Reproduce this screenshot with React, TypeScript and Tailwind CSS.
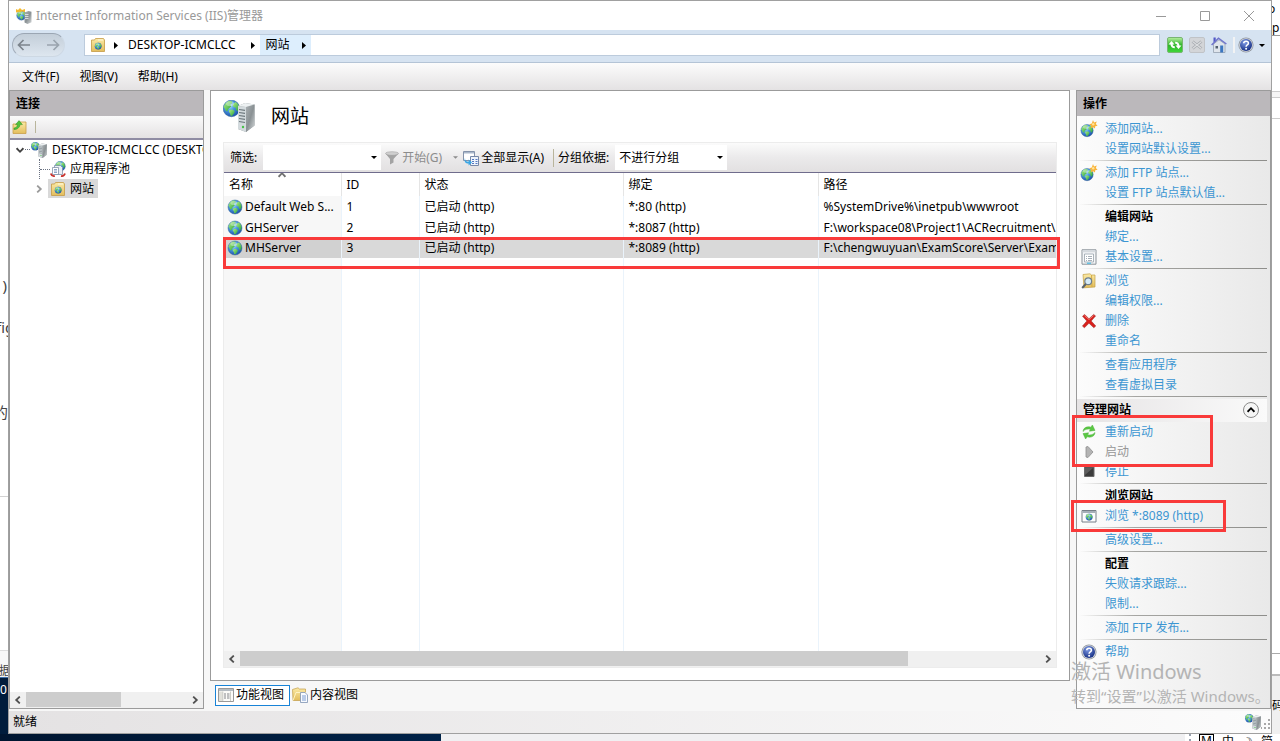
import React from 'react';

type IconProps = { className?: string };

type Site = {
  name: string;
  id: number;
  state: string;
  binding: string;
  path: string;
};

type Action = {
  label: string;
  icon?: React.ReactNode;
  kind?: 'link' | 'title' | 'disabled';
};

const sites: Site[] = [
  { name: 'Default Web S...', id: 1, state: '已启动 (http)', binding: '*:80 (http)', path: '%SystemDrive%\\inetpub\\wwwroot' },
  { name: 'GHServer', id: 2, state: '已启动 (http)', binding: '*:8087 (http)', path: 'F:\\workspace08\\Project1\\ACRecruitment\\' },
  { name: 'MHServer', id: 3, state: '已启动 (http)', binding: '*:8089 (http)', path: 'F:\\chengwuyuan\\ExamScore\\Server\\Exam' },
];

// Gradients shared by all the icons
const IconDefs = () => (
  <svg className="absolute h-0 w-0" aria-hidden="true">
    <defs>
      <radialGradient id="sea" cx="38%" cy="32%" r="75%">
        <stop offset="0" stopColor="#c4e9fc" />
        <stop offset="0.4" stopColor="#4c9ce4" />
        <stop offset="1" stopColor="#1746a4" />
      </radialGradient>
      <linearGradient id="land" x1="0" y1="0" x2="1" y2="1">
        <stop offset="0" stopColor="#b4f08a" />
        <stop offset="1" stopColor="#24a03a" />
      </linearGradient>
      <linearGradient id="steel" x1="0" y1="0" x2="1" y2="1">
        <stop offset="0" stopColor="#a9afb2" />
        <stop offset="0.5" stopColor="#8a9194" />
        <stop offset="1" stopColor="#d5d9da" />
      </linearGradient>
      <linearGradient id="folder" x1="0" y1="0" x2="0" y2="1">
        <stop offset="0" stopColor="#fbeaa6" />
        <stop offset="1" stopColor="#e3bd5c" />
      </linearGradient>
      <linearGradient id="grass" x1="0" y1="0" x2="0" y2="1">
        <stop offset="0" stopColor="#b9efa0" />
        <stop offset="0.5" stopColor="#2fb52b" />
        <stop offset="1" stopColor="#3fd83a" />
      </linearGradient>
      <radialGradient id="navy" cx="40%" cy="30%" r="75%">
        <stop offset="0" stopColor="#7f9be6" />
        <stop offset="1" stopColor="#10297f" />
      </radialGradient>
    </defs>
  </svg>
);

const GlobeShape = () => (
  <>
    <circle cx="8" cy="8" r="7" fill="url(#sea)" stroke="#3c6c9c" strokeWidth="0.5" />
    <path d="M2.600 4 5.400 1.600l3 .2.4 1.800-1.800 1.200.8 1.600-2.200 1.800-1.200 2.400-1.200-.6-1-2.200-.8-1z" fill="url(#land)" />
    <path d="m10 3.600 1.800-1 2 2 .9 3.200-1.300 2.600-1.400-1-.4-2-1.800-.6-.8-1.600z" fill="url(#land)" />
    <path d="m6.200 9.400 2.600-.6 2 1.400-.6 2-1.800 2.200-1.200-.4-.4-2-1-1.200z" fill="url(#land)" />
    <ellipse cx="6.800" cy="4" rx="3.400" ry="2" fill="#fff" opacity="0.35" />
  </>
);

const Globe = ({ className = 'h-4 w-4 shrink-0' }: IconProps) => (
  <svg viewBox="0 0 16 16" className={className} aria-hidden="true">
    <GlobeShape />
  </svg>
);

const NewSite = () => (
  <svg viewBox="0 0 18 18" className="h-[18px] w-[18px]" aria-hidden="true">
    <g transform="translate(0 3.500) scale(.88)">
      <GlobeShape />
    </g>
    <path d="m13 0 1 2.400 2.800-.8-1 2.400 1.800 1.800-2.400.4-.2 2.400-2-1.400-2.200 1 .4-2.400-2-1.600 2.600-.6z" fill="#f9b43a" />
    <circle cx="13.200" cy="4.200" r="1.200" fill="#ffe39a" />
  </svg>
);

const ServerGlobe = ({ className = 'h-4 w-4 shrink-0' }: IconProps) => (
  <svg viewBox="0 0 32 32" className={className} aria-hidden="true">
    <g transform="translate(-1 -1) scale(1.180)">
      <GlobeShape />
    </g>
    <path d="m15 6 7-3 9.500 1.500v21L23 32l-8-3z" fill="#8b9396" />
    <path d="m15 6 8 1v25l-8-3z" fill="#d3dadd" />
    <path d="m23 7 8.500-2.500v21L23 32z" fill="url(#steel)" />
    <path d="m15 6 7-3 9.500 1.500L23 7z" fill="#edf1f2" />
    <path d="M16 9.500l6 .8M16 12.500l6 .8M16 15.500l6 .8M16 18.500l6 .9M16 21.500l6 1" stroke="#6c777c" strokeWidth="1.200" />
    <circle cx="20" cy="27" r="1.200" fill="#46c246" />
  </svg>
);

const SiteFolder = ({ className = 'h-4 w-4 shrink-0' }: IconProps) => (
  <svg viewBox="0 0 16 16" className={className} aria-hidden="true">
    <path d="M1.500 3h3l1-1.500h8l1 1.500v11.500h-13z" fill="url(#folder)" stroke="#c59b45" strokeWidth="0.8" />
    <path d="M8 3h5" stroke="#fff8dc" />
    <g transform="translate(4.400 5.400) scale(.47)">
      <GlobeShape />
    </g>
  </svg>
);

const UpFolder = () => (
  <svg viewBox="0 0 16 16" className="h-4 w-4" aria-hidden="true">
    <path d="M1 5h5l1-2h7v11.500H1z" fill="url(#folder)" stroke="#c9a04a" strokeWidth="0.8" />
    <path d="M2 9c1.500 0 3-.6 3.600-3.400H3.600L7 1.600l3.400 4H8.200C7.600 9 4.600 10.800 2 10.600z" fill="#4fc23c" stroke="#2f8f28" strokeWidth="0.5" />
  </svg>
);

const AppPool = () => (
  <svg viewBox="0 0 16 16" className="h-4 w-4 shrink-0" aria-hidden="true">
    <g transform="translate(4.500 -.5) scale(.72)">
      <GlobeShape />
    </g>
    <path d="M4.500 4.500h6l2 2v7h-8z" fill="#e9eef4" stroke="#7286a0" strokeWidth="0.7" />
    <path d="M2.500 6.500h6v7h-6z" fill="#fff" stroke="#7286a0" strokeWidth="0.7" />
    <path d="M4 8.500h3M4 10h3M4 11.500h3" stroke="#5f7fb0" strokeWidth="0.7" />
    <path d="M.8 12.500c1 3 3 2.700 4 2.500M15 12.500c-1 3-3 2.700-4 2.500" fill="none" stroke="#c8322c" strokeWidth="1.800" />
  </svg>
);

const Funnel = () => (
  <svg viewBox="0 0 14 14" className="h-[14px] w-[14px]" aria-hidden="true">
    <path d="M.5 2.500 5 8v5.500l3.500-2V8l5-5.500z" fill="#a3a3a3" />
    <ellipse cx="7" cy="2.500" rx="6.500" ry="1.800" fill="#cfcfcf" stroke="#999" strokeWidth="0.5" />
  </svg>
);

const ShowAll = () => (
  <svg viewBox="0 0 16 16" className="h-4 w-4" aria-hidden="true">
    <path d="M.5 1.500h11v9H.5z" fill="#fff" stroke="#8493ab" />
    <path d="M1 2h10v1.500H1z" fill="#a9b7ca" />
    <path d="M7.500 6.500h8v9h-8z" fill="#eff4fb" stroke="#7688a8" />
    <path d="M9 9.500h2M12.500 9.500h2M9 11.500h2M12.500 11.500h2M9 13.500h2M12.500 13.500h2" stroke="#5378c2" />
    <path d="M2 8c0 2.600 1 3.800 3.600 3.800V9.600L9 12.600l-3.400 3v-2C2.400 13.600.8 11.600 2 8z" fill="#3aa6e4" />
  </svg>
);

const Settings = () => (
  <svg viewBox="0 0 16 16" className="h-4 w-4" aria-hidden="true">
    <path d="M1 .8h14v14.400H1z" fill="#f4f6f8" stroke="#8a9299" />
    <path d="M1.500 1.300h13v2h-13z" fill="#d5dade" />
    <path d="M3.500 5h9v8h-9z" fill="#fff" stroke="#98a2ab" strokeWidth="0.8" />
    <path d="M5 7.500h1M7 7.500h4M5 9.500h1M7 9.500h4M5 11.500h1M7 11.500h4" stroke="#8f9ba6" strokeWidth="0.8" />
    <path d="M6 14.200h4" stroke="#35b7e6" />
  </svg>
);

const Explore = () => (
  <svg viewBox="0 0 16 16" className="h-4 w-4" aria-hidden="true">
    <path d="M2 1.500 9 .8l1.500 1.200H14v12L3 14.800z" fill="url(#folder)" stroke="#c3a046" strokeWidth="0.7" />
    <path d="m10.500 2 .5 12" stroke="#d5ad48" />
    <circle cx="7.200" cy="8.200" r="3.400" fill="#d5ebf8" stroke="#6f7f8c" strokeWidth="1.200" />
    <path d="m4.800 11-3.600 4" stroke="#59636d" strokeWidth="2" />
  </svg>
);

const Delete = () => (
  <svg viewBox="0 0 16 16" className="h-4 w-4" aria-hidden="true">
    <path d="M1.500 3.200 3.600 1.400 8 5.800l4.600-4.400 2 1.500L10.200 8l4.600 5-2 1.800L8 10.200l-4.600 4.600-2-1.700L5.800 8z" fill="#d9201c" stroke="#98302c" strokeWidth="0.5" />
    <path d="m3.400 2.600 4.600 4 4.600-4" fill="none" stroke="#f58a80" strokeWidth="0.8" />
  </svg>
);

const Restart = () => (
  <svg viewBox="0 0 16 16" className="h-4 w-4" aria-hidden="true">
    <path d="M2 7.500C2.200 4 5.600 2 9.800 3.200L11.400 1l2.600 5.400-5.600.8 1-1.900C6.600 4.600 4 5.200 2 7.500z" fill="#5ac843" stroke="#4fb03f" strokeWidth="0.5" />
    <path d="M14 8.500c-.2 3.500-3.600 5.500-7.800 4.300L4.600 15 2 9.600l5.600-.8-1 1.900c2.800.7 5.400.1 7.400-2.200z" fill="#5ac843" stroke="#4fb03f" strokeWidth="0.5" />
  </svg>
);

const Play = () => (
  <svg viewBox="0 0 16 16" className="h-4 w-4" aria-hidden="true">
    <path d="M5 3v10l2 .5L12 8 7 2.500z" fill="#b4b4b4" stroke="#8f8f8f" strokeWidth="0.8" />
  </svg>
);

const Stop = () => (
  <svg viewBox="0 0 16 16" className="h-4 w-4" aria-hidden="true">
    <path d="M3.500 3h9.500v9.500H3.500z" fill="#3c3c3c" stroke="#6a6a6a" />
    <path d="M4 3.500h8.500L4 11z" fill="#5d5d5d" />
  </svg>
);

const BrowsePage = () => (
  <svg viewBox="0 0 16 16" className="h-4 w-4" aria-hidden="true">
    <path d="M1 2.500h14v11.500H1z" fill="#fdfdfd" stroke="#777f88" />
    <path d="M1.500 3h13v2h-13z" fill="#a6afb8" />
    <g transform="translate(4.300 5.200) scale(.48)">
      <GlobeShape />
    </g>
  </svg>
);

const Help = () => (
  <svg viewBox="0 0 16 16" className="h-4 w-4" aria-hidden="true">
    <circle cx="8" cy="8" r="7.600" fill="#8f959e" />
    <circle cx="8" cy="8" r="6.800" fill="#d3d7de" />
    <circle cx="8" cy="8" r="6" fill="url(#navy)" />
    <path d="M5.700 6.300C5.800 3.600 10.400 3.500 10.400 6.200 10.400 7.900 8.100 7.900 8.100 9.700" fill="none" stroke="#fff" strokeWidth="1.600" />
    <circle cx="8.100" cy="11.700" r="1" fill="#fff" />
  </svg>
);

const Refresh = () => (
  <svg viewBox="0 0 16 16" className="h-4 w-4" aria-hidden="true">
    <rect x="0.500" y="0.500" width="15" height="15" rx="1.500" fill="url(#grass)" stroke="#79b573" />
    <path d="M1.500 7.500 4.500 4l3 3.500H5.600c.2 1.200.9 1.800 2.200 1.800v2C5.200 11.300 3.700 9.900 3.500 7.500z" fill="#fff" />
    <path d="M14.500 8.500 11.500 12l-3-3.500h1.900C10.200 7.300 9.500 6.700 8.200 6.700v-2c2.600 0 4.100 1.400 4.300 3.800z" fill="#fff" />
  </svg>
);

const StopLoading = () => (
  <svg viewBox="0 0 16 16" className="h-4 w-4" aria-hidden="true">
    <rect x="0.500" y="0.500" width="15" height="15" rx="1.500" fill="#d3d5d8" stroke="#c0c3c7" />
    <path d="m3.500 4.500 9 7M12.500 4.500l-9 7" stroke="#a5a9ae" strokeWidth="2.800" />
    <path d="m3.500 4.500 9 7M12.500 4.500l-9 7" stroke="#dcdee0" strokeWidth="1.200" />
  </svg>
);

const Home = () => (
  <svg viewBox="0 0 16 16" className="h-4 w-4" aria-hidden="true">
    <path d="M2.500 7v8.500h11.500V7L8 2.800z" fill="#dfe5ec" stroke="#8c98a8" strokeWidth="0.7" />
    <path d="M2.500.5h2.200v4.500H2.500z" fill="#5258c6" />
    <path d="M.6 8 7.500 1.200 15.400 7" fill="none" stroke="#7075cc" strokeWidth="1.500" />
    <path d="M4.500 9H7v2.500H4.500z" fill="#52606e" />
    <path d="M9.200 8.500h3v7h-3z" fill="#3b76c0" />
  </svg>
);

const FeatureView = () => (
  <svg viewBox="0 0 16 16" className="h-4 w-4" aria-hidden="true">
    <path d="M.5 1.500h15v13H.5z" fill="#fbfbf8" stroke="#999" />
    <path d="M1 2h14v2H1z" fill="#b5bcc2" />
    <path d="M1 4.500h3.500v9.500H1z" fill="#e1e1da" />
    <path d="M4.800 4.500V14M12.500 4.500V14" stroke="#b9b9b2" strokeWidth="0.7" />
    <path d="M6 7h2M9 7h2.500M6 9h2M9 9h2.500M6 11h2M9 11h2.500" stroke="#84868a" />
  </svg>
);

const ContentView = () => (
  <svg viewBox="0 0 16 16" className="h-4 w-4" aria-hidden="true">
    <path d="M.5 2.500 6 .8l1.500 1.200h6V5l-2 8.500H1z" fill="url(#folder)" stroke="#c19c49" strokeWidth="0.7" />
    <path d="m1 13.500 3-8h9.500" fill="none" stroke="#fff3c4" />
    <path d="M8.500 5.500h4.500l2.500 2.500v7.500h-7z" fill="#f7fafe" stroke="#7d93b3" strokeWidth="0.8" />
    <path d="M10 9h4M10 11h4M10 13h4" stroke="#5b84c6" strokeWidth="0.8" />
  </svg>
);

const Caret = ({ className = 'h-[3px] w-[6px] text-black' }: IconProps) => (
  <svg viewBox="0 0 6 3" className={className} aria-hidden="true">
    <path d="M0 0h6L3 3z" fill="currentColor" />
  </svg>
);

const Crumb = () => (
  <svg viewBox="0 0 4 7" className="h-[7px] w-1" aria-hidden="true">
    <path d="M0 0v7l4-3.500z" />
  </svg>
);

const Chevron = ({ className = '' }: IconProps) => (
  <svg viewBox="0 0 8 8" className={`h-2 w-2 shrink-0 ${className}`} fill="none" stroke="currentColor" strokeWidth="1.800" aria-hidden="true">
    <path d="M5.800.6 2.200 4l3.600 3.400" />
  </svg>
);

const TitleBar = () => (
  <header className="flex h-[29px] shrink-0 items-center bg-white pl-[7px]">
    <svg viewBox="0 0 16 16" className="h-4 w-4" aria-hidden="true">
      <g transform="translate(0 2) scale(.68)">
        <GlobeShape />
      </g>
      <path d="M0 4.500V1l2 1L4 0l2 2 3-1v3L6 3.500 3 4z" fill="#f4b92e" />
      <path d="m8.500 4.500 4-1.500 3 .8v10.400L11.500 16l-3-1.500z" fill="url(#steel)" />
      <path d="M9 6.500h3.500M9 8.500h3.500M9 10.500h3.500" stroke="#e9eef0" strokeWidth="0.8" />
    </svg>
    <h1 className="ml-1 flex-1 text-[12px] text-[#999]">Internet Information Services (IIS)管理器</h1>
    <div className="flex text-[#999]">
      <button aria-label="最小化" className="grid h-7 w-11 place-items-center">
        <svg viewBox="0 0 10 10" className="h-[10px] w-[10px]" fill="none" stroke="currentColor"><path d="M0 5.500h10" /></svg>
      </button>
      <button aria-label="最大化" className="grid h-7 w-11 place-items-center">
        <svg viewBox="0 0 10 10" className="h-[10px] w-[10px]" fill="none" stroke="currentColor"><path d="M.5.5h9v9h-9z" /></svg>
      </button>
      <button aria-label="关闭" className="grid h-7 w-11 place-items-center">
        <svg viewBox="0 0 10 10" className="h-[10px] w-[10px]" fill="none" stroke="currentColor"><path d="m0 0 10 10M10 0 0 10" /></svg>
      </button>
    </div>
  </header>
);

const AddressBar = () => (
  <nav className="flex h-[33px] shrink-0 items-center border-b border-[#b4c4d6] bg-[#d6e3f1] pb-[2px] pl-[3px]" aria-label="地址">
    <div className="flex h-6 w-[53px] items-center justify-between rounded-full border border-t-[#9ba6b3] border-r-[#ced9e5] border-b-[#cdd8e3] border-l-[#a4afbc] bg-gradient-to-b from-[#c3ced9] to-[#dde6ef] px-1">
      <button aria-label="后退">
        <svg viewBox="0 0 13 12" className="h-3 w-[13px]" fill="none" stroke="#7c848c" strokeWidth="1.700"><path d="M13 6H1.500M6.500 1l-5 5 5 5" /></svg>
      </button>
      <button aria-label="前进">
        <svg viewBox="0 0 13 12" className="h-3 w-[13px]" fill="none" stroke="#9aa4ae" strokeWidth="1.700"><path d="M0 6h11.500M6.500 1l5 5-5 5" /></svg>
      </button>
    </div>
    <div className="ml-[19px] flex h-[22px] flex-1 items-center border border-[#bccbdc] bg-white">
      <button className="flex h-full items-center gap-2 px-[5px]" aria-label="根">
        <SiteFolder />
        <Crumb />
      </button>
      <button className="flex h-full items-center gap-4 px-[5px]">
        DESKTOP-ICMCLCC
        <Crumb />
      </button>
      <button className="flex h-full items-center gap-3 bg-[#ddeefd] px-[5px]">
        网站
        <Crumb />
      </button>
    </div>
    <div className="ml-[7px] flex items-center gap-[6px] pr-[6px]">
      <button aria-label="刷新"><Refresh /></button>
      <button aria-label="停止"><StopLoading /></button>
      <button aria-label="主页"><Home /></button>
      <div className="flex items-center gap-[3px]">
        <span className="h-4 w-[2px] bg-[#f2f3f4]" />
        <button aria-label="帮助" className="flex items-center gap-[5px]">
          <Help />
          <Caret />
        </button>
      </div>
    </div>
  </nav>
);

const MenuBar = () => (
  <div className="flex h-[27px] shrink-0 items-center gap-5 bg-gradient-to-b from-[#fcfcfc] to-[#e4e2e3] pl-[13px]">
    <button>文件(F)</button>
    <button>视图(V)</button>
    <button>帮助(H)</button>
  </div>
);

const ScrollBar = ({ size }: { size: string }) => (
  <div className="flex h-4 shrink-0 items-center bg-[#f0f0f0] text-[#505050]">
    <button aria-label="向左滚动" className="grid h-4 w-4 shrink-0 place-items-center"><Chevron /></button>
    <div className="h-full flex-1"><div className="h-[15px] bg-[#cdcdcd]" style={{ width: size }} /></div>
    <button aria-label="向右滚动" className="grid h-4 w-4 shrink-0 place-items-center"><Chevron className="rotate-180" /></button>
  </div>
);

const Connections = () => (
  <aside className="flex w-[195px] shrink-0 flex-col border border-[#9b9b9b] bg-white">
    <h2 className="h-[25px] shrink-0 bg-[#bbb8bb] pl-[6px] leading-[25px] font-bold">连接</h2>
    <div className="flex h-6 shrink-0 items-center gap-[7px] border-b-2 border-[#8f8ca3] bg-gradient-to-b from-[#fafafa] to-[#e4e2e3] pl-[2px]">
      <button aria-label="向上"><UpFolder /></button>
      <span className="h-3 w-px bg-[#b9b59c]" />
    </div>
    <ul className="min-h-0 flex-1 overflow-hidden whitespace-nowrap">
      <li className="flex h-[19px] items-center pl-[6px]">
        <Chevron className="-rotate-90 text-[#404040]" />
        <span className="mx-px w-[5px] shrink-0 border-t border-dotted border-gray-500" />
        <ServerGlobe />
        <span className="ml-[5px]">DESKTOP-ICMCLCC (DESKTOP</span>
      </li>
      <li className="flex h-5 items-center pl-[29px]">
        <span className="h-5 w-[11px] border-l border-dotted border-gray-500 pt-[10px]"><span className="block border-t border-dotted border-gray-500" /></span>
        <AppPool />
        <span className="ml-1">应用程序池</span>
      </li>
      <li className="flex h-[19px] items-center pl-[25px]">
        <Chevron className="rotate-180 text-[#9a9a9a]" />
        <span className="ml-[5px] flex h-[19px] items-center gap-1 bg-[#d9d9d9] pr-1 pl-[2px]">
          <SiteFolder />
          网站
        </span>
      </li>
    </ul>
    <ScrollBar size="59%" />
  </aside>
);

const FilterBar = () => (
  <div className="flex h-[30px] shrink-0 items-center border-b border-[#6f6c8c] bg-gradient-to-b from-[#fbfbfb] via-[#ebeaeb] to-[#e2e0e1] pl-[6px]">
    <label htmlFor="filter">筛选:</label>
    <div className="ml-[6px] flex h-[25px] w-[118px] items-center bg-white pr-1">
      <input id="filter" className="w-0 flex-1 outline-none" />
      <Caret />
    </div>
    <button className="ml-1 flex items-center gap-[3px] text-[#8c8c8c]" disabled>
      <Funnel />
      开始(G)
    </button>
    <Caret className="ml-[11px] h-[3px] w-[5px] text-[#8c8c8c]" />
    <button className="ml-[5px] flex items-center gap-[2px]">
      <ShowAll />
      全部显示(A)
    </button>
    <span className="mr-1 ml-[9px] h-[18px] w-px bg-[#b9b59c]" />
    <label htmlFor="group">分组依据:</label>
    <div className="relative ml-[6px] flex h-[25px] w-28 items-center bg-white">
      <select id="group" className="w-full appearance-none pl-1 outline-none">
        <option>不进行分组</option>
      </select>
      <Caret className="pointer-events-none absolute right-1 h-[3px] w-[6px]" />
    </div>
  </div>
);

const SiteTable = () => (
  <div className="relative min-h-0 flex-1">
    <div className="h-full overflow-hidden">
      <table className="h-full w-full table-fixed border-collapse text-left whitespace-nowrap">
        <colgroup>
          <col className="w-[117px]" />
          <col className="w-[78px]" />
          <col className="w-[204px]" />
          <col className="w-[195px]" />
          <col />
        </colgroup>
        <thead>
          <tr className="h-[23px]">
            <th className="relative border-r border-[#e5e5e5] pl-[5px] font-normal">
              名称
              <Chevron className="absolute -top-[2px] left-[54px] rotate-90 text-[#707070]" />
            </th>
            <th className="border-r border-[#e5e5e5] pl-[5px] font-normal">ID</th>
            <th className="border-r border-[#e5e5e5] pl-[5px] font-normal">状态</th>
            <th className="border-r border-[#e5e5e5] pl-[5px] font-normal">绑定</th>
            <th className="pl-[5px] font-normal">路径</th>
          </tr>
        </thead>
        <tbody>
          {sites.map((site) => (
            <tr key={site.id} className={site.id === 3 ? 'h-5 bg-[#d9d9d9]' : 'h-[21px]'}>
              <td className={`border-r border-[#eaf3fb] pl-[3px] ${site.id === 3 ? 'bg-[#d1d1d1]' : 'bg-[#f7f7f7]'}`}>
                <div className="flex items-center gap-[2px]">
                  <Globe />
                  {site.name}
                </div>
              </td>
              <td className="border-r border-[#eaf3fb] pl-[5px]">{site.id}</td>
              <td className="border-r border-[#eaf3fb] pl-[5px]">{site.state}</td>
              <td className="border-r border-[#eaf3fb] pl-[5px]">{site.binding}</td>
              <td className="overflow-hidden pl-[5px]">{site.path}</td>
            </tr>
          ))}
          {/* Empty row that carries the column lines to the bottom */}
          <tr aria-hidden="true">
            <td className="border-r border-[#eaf3fb] bg-[#f7f7f7]" />
            <td className="border-r border-[#eaf3fb]" />
            <td className="border-r border-[#eaf3fb]" />
            <td className="border-r border-[#eaf3fb]" />
            <td />
          </tr>
        </tbody>
      </table>
    </div>
    <div className="pointer-events-none absolute top-16 -right-1 -left-px h-8 border-3 border-[#f93a3a]" />
  </div>
);

const ActionItem = ({ label, icon, kind = 'link' }: Action) => (
  <li className="flex h-5 items-center">
    <span className="grid w-6 shrink-0 place-items-center">{icon}</span>
    {kind === 'link' && <a href="#" className="ml-1 text-[#3c96d2]">{label}</a>}
    {kind === 'title' && <strong className="ml-1">{label}</strong>}
    {kind === 'disabled' && <span className="ml-1 text-[#969696]">{label}</span>}
  </li>
);

const ActionGroup = ({ items, last }: { items: Action[]; last?: boolean }) => (
  <>
    <ul>
      {items.map((item) => (
        <ActionItem key={item.label} {...item} />
      ))}
    </ul>
    {!last && (
      <div className="h-1 pt-px pr-[3px] pl-[2px]">
        <div className="h-px bg-gradient-to-r from-transparent via-[#a5a5a2] via-30% to-[#8e8e8b]" />
      </div>
    )}
  </>
);

const Actions = () => (
  <aside className="relative flex w-[195px] shrink-0 flex-col border border-[#9b9b9b] bg-gradient-to-r from-[#fcfcfc] to-[#e9e9e9]">
    <h2 className="mb-[3px] h-[25px] shrink-0 bg-[#bbb8bb] pl-[6px] leading-[25px] font-bold">操作</h2>
    <ActionGroup items={[{ label: '添加网站...', icon: <NewSite /> }, { label: '设置网站默认设置...' }]} />
    <ActionGroup items={[{ label: '添加 FTP 站点...', icon: <NewSite /> }, { label: '设置 FTP 站点默认值...' }]} />
    <ActionGroup items={[{ label: '编辑网站', kind: 'title' }, { label: '绑定...' }, { label: '基本设置...', icon: <Settings /> }]} />
    <ActionGroup items={[{ label: '浏览', icon: <Explore /> }, { label: '编辑权限...' }, { label: '删除', icon: <Delete /> }, { label: '重命名' }]} />
    <ActionGroup items={[{ label: '查看应用程序' }, { label: '查看虚拟目录' }]} />
    <div className="mr-[3px] flex h-[23px] items-center justify-between bg-gradient-to-r from-[#e6e4e5] to-[#fafafa] pr-2 pb-[2px] pl-[6px]">
      <h3 className="font-bold">管理网站</h3>
      <button aria-label="折叠" className="grid h-4 w-4 place-items-center rounded-full border border-[#8a8a8a] bg-[#f5f5f5]">
        <Chevron className="rotate-90" />
      </button>
    </div>
    <div className="relative">
      <ActionGroup
        items={[
          { label: '重新启动', icon: <Restart /> },
          { label: '启动', icon: <Play />, kind: 'disabled' },
          { label: '停止', icon: <Stop /> },
        ]}
      />
      <div className="pointer-events-none absolute -top-[7px] -left-[5px] h-[52px] w-[141px] border-3 border-[#f93a3a]" />
    </div>
    <div className="relative">
      <ActionGroup items={[{ label: '浏览网站', kind: 'title' }, { label: '浏览 *:8089 (http)', icon: <BrowsePage /> }]} />
      <div className="pointer-events-none absolute top-[14px] -left-[6px] h-8 w-[155px] border-3 border-[#f93a3a]" />
    </div>
    <ActionGroup items={[{ label: '高级设置...' }]} />
    <ActionGroup items={[{ label: '配置', kind: 'title' }, { label: '失败请求跟踪...' }, { label: '限制...' }]} />
    <ActionGroup items={[{ label: '添加 FTP 发布...' }]} />
    <ActionGroup items={[{ label: '帮助', icon: <Help /> }]} last />
    <div className="pointer-events-none absolute bottom-0 -left-[6px] whitespace-nowrap text-[#b4b4b4]">
      <p className="text-[20px] leading-6">激活 Windows</p>
      <p className="text-[15px] leading-6">转到“设置”以激活 Windows。</p>
    </div>
  </aside>
);

const Sites = () => (
  <main className="mx-[6px] flex min-w-0 flex-1 flex-col">
    <section className="flex min-h-0 flex-1 flex-col border border-[#9b9b9b] bg-white px-3 pb-3">
      <div className="flex h-[51px] shrink-0 items-center gap-4 pb-[2px]">
        <ServerGlobe className="h-8 w-8" />
        <h2 className="text-[19px]">网站</h2>
      </div>
      <div className="flex min-h-0 flex-1 flex-col border border-[#ececec]">
        <FilterBar />
        <SiteTable />
        <ScrollBar size="83.5%" />
      </div>
    </section>
    <div className="flex h-7 shrink-0 items-center gap-[2px] pl-[5px]">
      <button className="flex h-[21px] items-center gap-[2px] border border-[#1883d7] bg-white px-[2px] pr-[5px]">
        <FeatureView />
        功能视图
      </button>
      <button className="flex h-[21px] items-center gap-[2px]">
        <ContentView />
        内容视图
      </button>
    </div>
  </main>
);

const StatusBar = () => (
  <footer className="flex h-[22px] shrink-0 items-center justify-between bg-gradient-to-r from-[#e4e2e3] to-[#fcfcfc] pl-1">
    <span>就绪</span>
    <div className="flex items-center">
      <ServerGlobe />
      <svg viewBox="0 0 10 12" className="mt-1 h-3 w-[10px]" fill="#a8a8a8" aria-hidden="true">
        <path d="M7 1h2v2H7zM7 5h2v2H7zM7 9h2v2H7zM3 5h2v2H3zM3 9h2v2H3zM-1 9h2v2h-2z" />
      </svg>
    </div>
  </footer>
);

// Slices of the windows lying behind, seen at both edges of the screen
const LeftEdge = () => (
  <div className="relative w-2 shrink-0 overflow-hidden bg-white text-[15px] text-[#444]">
    <span className="absolute top-[276px] right-px">)</span>
    <span className="absolute top-[318px] -left-1">fig</span>
    <span className="absolute top-[403px] right-0">的</span>
    <span className="absolute top-[496px] h-px w-full bg-[#d2d2d2]" />
    <span className="absolute top-[650px] bottom-0 w-full border-t border-[#ddd] bg-[#f7f7f7]" />
    <span className="absolute top-[662px] -left-px text-[12px]">据</span>
    <span className="absolute top-[677px] bottom-0 w-full border-t border-[#3b6ea8] bg-[#001c3c] text-[12px] leading-6 text-white">0</span>
  </div>
);

const RightEdge = () => (
  <div className="relative w-2 shrink-0 overflow-hidden bg-white text-[12px]">
    <span className="absolute top-0 -left-1">o</span>
    <span className="absolute top-[19px] left-0">p</span>
    <span className="absolute top-[35px] h-px w-full bg-[#999]" />
    <span className="absolute top-[91px] h-[7px] w-full border-y border-[#ccc] bg-[#f5f5f5]" />
    <span className="absolute top-[118px] h-px w-full bg-[#ccc]" />
    <span className="absolute top-[653px] h-px w-full bg-[#aaa]" />
    <span className="absolute top-[674px] bottom-0 w-full border-t-2 border-[#bbb] bg-[#f0f0f0]" />
    <span className="absolute top-[697px] left-0">码</span>
  </div>
);

const Taskbar = () => (
  <div className="flex h-[7px] shrink-0 overflow-hidden bg-[#f0f0f2]">
    <div className="w-[441px] shrink-0 bg-gradient-to-r from-[#001530] to-[#002248]" />
    <div className="flex-1" />
    <div className="flex w-[95px] items-start gap-2 bg-white pl-1 text-[12px] leading-4">
      <span className="h-full border-l-2 border-dotted border-gray-400" />
      <span className="border border-black px-px leading-3">M</span>
      <span>中</span>
      <span>☽</span>
      <span>简</span>
    </div>
  </div>
);

const App: React.FC = () => {
  return (
    <div className="flex h-screen flex-col overflow-hidden font-['Noto_Sans','Noto_Sans_CJK_SC',sans-serif] text-[12px] leading-[18px] text-black">
      <IconDefs />
      <div className="flex min-h-0 flex-1">
        <LeftEdge />
        <div className="flex min-w-0 flex-1 flex-col border border-[#a0a0a0] bg-[#f7f7f7]">
          <TitleBar />
          <AddressBar />
          <MenuBar />
          <div className="mb-[2px] flex min-h-0 flex-1">
            <Connections />
            <Sites />
            <Actions />
          </div>
          <StatusBar />
        </div>
        <RightEdge />
      </div>
      <Taskbar />
    </div>
  );
};

export default App;
